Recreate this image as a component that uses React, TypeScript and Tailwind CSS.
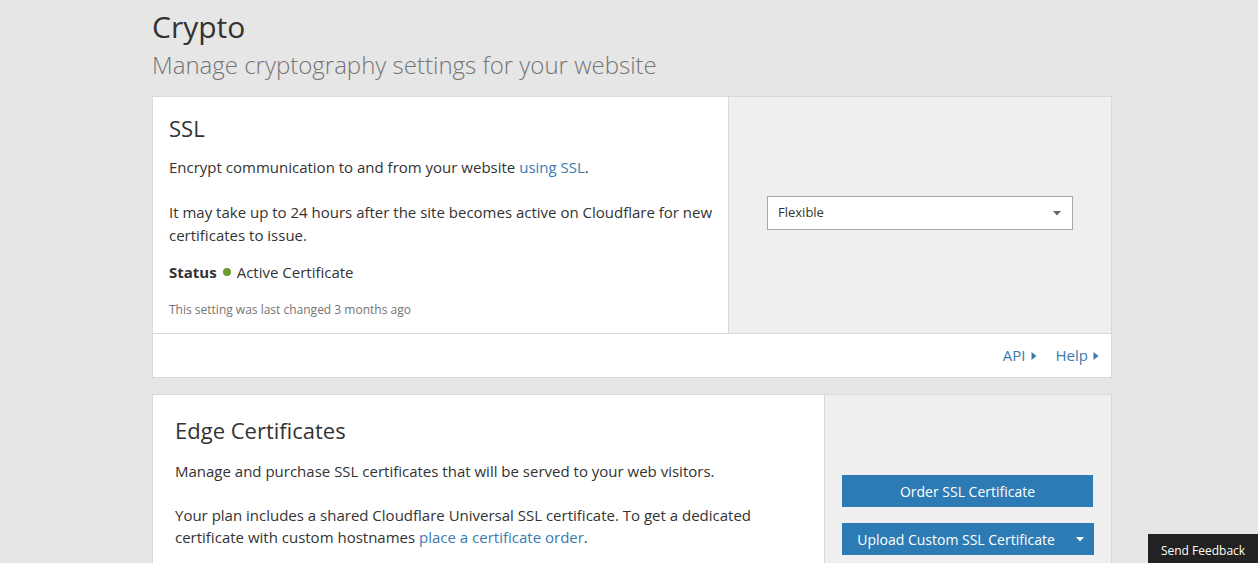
import React from "react";

const Caret = ({ className }: { className: string }) => (
  <svg className={className} width="10" height="8" viewBox="0 0 10 8" aria-hidden="true">
    <path d="M1 2h8L5 6.5z" fill="currentColor" />
  </svg>
);

const RightArrow = () => (
  <svg className="ml-[5px] inline-block" width="6" height="10" viewBox="0 0 6 10" aria-hidden="true">
    <path d="M0.5 1v8L5.5 5z" fill="currentColor" />
  </svg>
);

export default function App() {
  return (
    <div className="min-h-[563px] w-full bg-[#e6e6e6] font-['Open_Sans','Liberation_Sans',sans-serif] text-[#333]">
      <main className="ml-[152px] w-[960px] pt-[6px]">
        <header className="mb-[14px]">
          <h1 className="text-[30px] leading-[42px] text-[#333]">Crypto</h1>
          <p className="text-[24px] leading-[34px] font-light text-[#757575]">
            Manage cryptography settings for your website
          </p>
        </header>

        {/* SSL */}
        <section className="border border-[#d9d9d9] bg-white">
          <div className="flex">
            <div className="w-[576px] pl-[16px] pr-[6px] pt-[16px] pb-[15px]">
              <h2 className="text-[22px] leading-[30px] text-[#333]">SSL</h2>
              <p className="mt-[13px] text-[15px] leading-[22px]">
                Encrypt communication to and from your website{" "}
                <a href="#" className="text-[#3a7ab0]">using SSL</a>.
              </p>
              <p className="mt-[23px] text-[15px] leading-[23px]">
                It may take up to 24 hours after the site becomes active on Cloudflare for new
                certificates to issue.
              </p>
              <p className="mt-[14px] flex items-center text-[15px] leading-[22px]">
                <span className="font-bold">Status</span>
                <span className="mx-[6px] inline-block h-[8px] w-[8px] rounded-full bg-[#6b9b2f]" />
                Active Certificate
              </p>
              <p className="mt-[19px] text-[12px] leading-[16px] text-[#757575]">
                This setting was last changed 3 months ago
              </p>
            </div>
            <div className="flex flex-1 items-center border-l border-[#d9d9d9] bg-[#efefef] pl-[38px] pr-[38px]">
              <div className="-mt-[4px] flex h-[34px] w-[306px] items-center justify-between border border-[#a8a8a8] bg-white px-[10px] text-[13px] text-[#333]">
                <span>Flexible</span>
                <Caret className="text-[#666]" />
              </div>
            </div>
          </div>
          <footer className="flex h-[44px] items-center justify-end gap-[19px] border-t border-[#d9d9d9] pr-[12px] text-[15px] text-[#3a7ab0]">
            <a href="#" className="flex items-center">API<RightArrow /></a>
            <a href="#" className="flex items-center">Help<RightArrow /></a>
          </footer>
        </section>

        {/* Edge Certificates */}
        <section className="mt-[16px] flex border border-[#d9d9d9] bg-white">
          <div className="w-[671px] px-[22px] pt-[20px] pb-[20px]">
            <h2 className="text-[22px] leading-[30px] text-[#333]">Edge Certificates</h2>
            <p className="mt-[15px] text-[15px] leading-[22px]">
              Manage and purchase SSL certificates that will be served to your web visitors.
            </p>
            <p className="mt-[22px] text-[15px] leading-[22px]">
              Your plan includes a shared Cloudflare Universal SSL certificate. To get a dedicated
              certificate with custom hostnames{" "}
              <a href="#" className="text-[#3a7ab0]">place a certificate order</a>.
            </p>
          </div>
          <div className="flex flex-1 flex-col gap-[16px] border-l border-[#d9d9d9] bg-[#efefef] px-[17px] pt-[80px] pb-[20px]">
            <button className="h-[32px] w-[251px] bg-[#2d7bb4] text-[14px] text-white">
              Order SSL Certificate
            </button>
            <button className="flex h-[32px] w-[252px] items-center bg-[#2d7bb4] text-[14px] text-white">
              <span className="flex-1 pl-[4px]">Upload Custom SSL Certificate</span>
              <span className="flex h-full w-[28px] items-center justify-center">
                <Caret className="text-white" />
              </span>
            </button>
          </div>
        </section>
      </main>

      <div className="fixed bottom-0 right-0 flex h-[29px] w-[110px] items-end justify-center bg-[#222] pb-[3px] text-[12px] text-white">
        Send Feedback
      </div>
    </div>
  );
}
